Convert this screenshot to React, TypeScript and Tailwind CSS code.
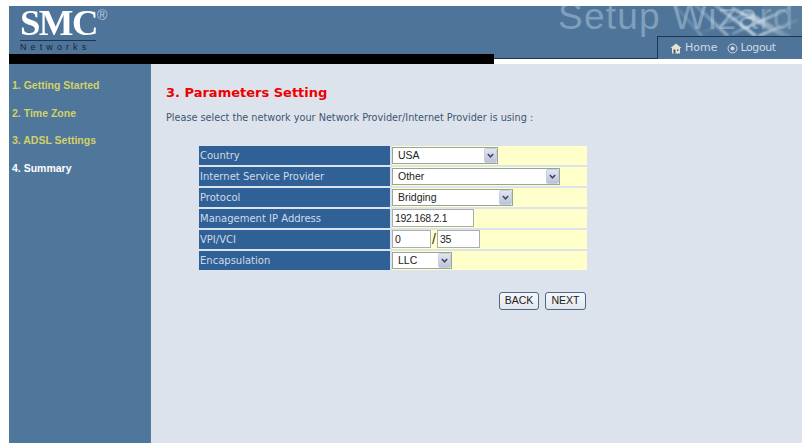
const verdana = "font-['DejaVu_Sans',sans-serif]";
const arial = "font-['Liberation_Sans',Arial,sans-serif]";

const steps = [
  { label: "1. Getting Started", color: "text-[#d2d268]" },
  { label: "2. Time Zone", color: "text-[#d2d268]" },
  { label: "3. ADSL Settings", color: "text-[#d2d268]" },
  { label: "4. Summary", color: "text-white" },
];

const Arrow = () => (
  <span className="absolute right-0 top-0 bottom-0 w-[13px] bg-gradient-to-b from-[#e4e6f0] to-[#bcc3d8] border border-[#c8cfdc] rounded-[2px] flex items-center justify-center pointer-events-none">
    <svg width="7" height="5" viewBox="0 0 7 5">
      <path d="M0.8 1 L3.5 3.8 L6.2 1" fill="none" stroke="#3a4a6a" strokeWidth="1.6" />
    </svg>
  </span>
);

const Select = ({ value, width }: { value: string; width: string }) => (
  <div className={`relative h-[17px] overflow-hidden border border-[#9aa59a] bg-white ${width}`}>
    <select
      defaultValue={value}
      className={`block appearance-none w-full h-[15px] min-h-0 m-0 py-0 pl-[5px] bg-white text-[10.5px] leading-[15px] text-[#222] outline-none ${arial}`}
    >
      <option>{value}</option>
    </select>
    <Arrow />
  </div>
);

const TextInput = ({ value, width }: { value: string; width: string }) => (
  <input
    defaultValue={value}
    className={`h-[18px] border border-[#a9b0a9] bg-white px-[2px] text-[10.5px] tracking-[-0.3px] text-[#222] outline-none ${arial} ${width}`}
  />
);

const rows = [
  { label: "Country", field: <Select value="USA" width="w-[106px]" /> },
  { label: "Internet Service Provider", field: <Select value="Other" width="w-[168px]" /> },
  { label: "Protocol", field: <Select value="Bridging" width="w-[121px]" /> },
  { label: "Management IP Address", field: <TextInput value="192.168.2.1" width="w-[82px]" /> },
  {
    label: "VPI/VCI",
    field: (
      <div className="flex items-center">
        <TextInput value="0" width="w-[39px]" />
        <span className={`w-[6px] text-center text-[14px] leading-none text-[#333] ${arial}`}>/</span>
        <TextInput value="35" width="w-[43px]" />
      </div>
    ),
  },
  { label: "Encapsulation", field: <Select value="LLC" width="w-[60px]" /> },
];

const Btn = ({ children, width }: { children: string; width: string }) => (
  <button
    className={`h-[18px] rounded-[3px] border border-[#4a6a8a] bg-gradient-to-b from-[#f6f7fa] to-[#e2e6ec] text-[10.5px] leading-none text-[#222] ${arial} ${width}`}
  >
    {children}
  </button>
);

export default function App() {
  return (
    <div className="h-[448px] w-[809px] overflow-hidden bg-white pt-[6px] pl-[9px] pr-[7px] pb-[5px] flex flex-col">
      {/* top banner */}
      <div className="relative shrink-0">
        <div className="h-[48px] bg-[#4e7499] overflow-hidden relative">
          <div className="pl-[11px] pt-[2px]">
            <div className="w-[76px] flex items-start h-[32px]">
              <span className="font-['Liberation_Serif',serif] font-bold text-[35px] leading-[32px] text-white tracking-[-1.5px] scale-x-[1.05] origin-left">SMC</span>
              <span className={`absolute left-[88px] top-[2px] text-[14px] leading-none text-[#b9cbdc] ${arial}`}>®</span>
            </div>
            <div className={`w-[76px] border-t border-[#1c3550] pt-[1px] text-[9px] leading-[10px] tracking-[4.1px] text-[#16263a] ${arial}`}>Networks</div>
          </div>

          <span className={`absolute left-[549px] top-[-10px] text-[37px] leading-[42px] tracking-[1.2px] text-[#7f9fba] ${arial}`}>Setup Wizard</span>

          {/* streaky photo behind the wizard title */}
          <svg className="absolute right-0 top-0" width="140" height="48" viewBox="0 0 140 48">
            <defs>
              <filter id="soft"><feGaussianBlur stdDeviation="1" /></filter>
              <linearGradient id="fade" x1="0" x2="1" y1="0" y2="0">
                <stop offset="0" stopColor="#a9c4da" stopOpacity="0.15" />
                <stop offset="0.65" stopColor="#dfeaf2" stopOpacity="0.8" />
                <stop offset="1" stopColor="#8ba8c2" stopOpacity="0.35" />
              </linearGradient>
            </defs>
            <rect x="100" y="0" width="40" height="48" fill="#6f8ea9" opacity="0.35" />
            <g filter="url(#soft)" fill="none" stroke="url(#fade)" strokeWidth="3">
              <path d="M10 -4 L40 30 M30 -4 L66 30 M52 -2 L94 30 M70 2 L122 30 M88 8 L130 32" />
              <path d="M42 26 L88 6 M70 28 L128 2 M96 30 L136 14" strokeWidth="2" />
            </g>
          </svg>
        </div>

        <div className="flex h-[10px]">
          <div className="w-[485px] bg-black" />
          <div className="flex-1">
            <div className="h-[4px] bg-[#4e7499] border-b border-[#1c3550] box-content" />
            <div className="h-[5px] bg-white" />
          </div>
        </div>

        {/* home / logout tab */}
        <div className={`absolute right-0 top-[30px] w-[145px] h-[23px] bg-[#4e7499] border-t border-l border-[#1c3550] flex items-center pl-[12px] pt-[1px] text-[11px] text-[#cdd9e4] ${verdana}`}>
          <svg width="12" height="11" viewBox="0 0 12 11" className="mr-[3px]">
            <path d="M6 0.5 L11.5 5 L10 5 V10.5 H2 V5 L0.5 5 Z" fill="#e6e2d4" />
            <path d="M3.5 6.5 H5.5 V10.5 H3.5 Z M7 6.5 H8.5 V8 H7 Z" fill="#4a5a68" />
          </svg>
          <span>Home</span>
          <svg width="11" height="11" viewBox="0 0 11 11" className="ml-[10px] mr-[2px]">
            <circle cx="5.5" cy="5.5" r="4.5" fill="none" stroke="#cdd9e4" strokeWidth="1" />
            <circle cx="5.5" cy="5.5" r="2" fill="#cdd9e4" />
          </svg>
          <span className="tracking-[-0.4px]">Logout</span>
        </div>
      </div>

      <div className="flex flex-1 min-h-0">
        {/* steps */}
        <aside className="w-[142px] shrink-0 bg-[#4f769b] pt-[14px] pl-[3px] border-r border-[#5d7a96]">
          {steps.map((s) => (
            <div key={s.label} className={`h-[27.5px] text-[10.5px] leading-[14px] font-bold ${arial} ${s.color}`}>
              {s.label}
            </div>
          ))}
        </aside>

        <main className="flex-1 bg-[#dde3ec] pl-[15px]">
          <h1 className={`mt-[21px] text-[13px] leading-[16px] font-bold text-[#ee0000] ${verdana}`}>3. Parameters Setting</h1>
          <p className={`mt-[11px] text-[9.7px] leading-[12px] text-[#3d5570] ${verdana}`}>
            Please select the network your Network Provider/Internet Provider is using :
          </p>

          <div className="ml-[33px] mt-[22px] w-[388px] flex flex-col gap-[2.4px]">
            {rows.map((r) => (
              <div key={r.label} className="flex h-[18.6px] gap-[2px]">
                <div className={`w-[191px] bg-[#2f6096] pl-[1px] flex items-center text-[10px] text-[#cfdbe8] ${verdana}`}>
                  {r.label}
                </div>
                <div className="flex-1 bg-[#ffffcc] flex items-center">{r.field}</div>
              </div>
            ))}
          </div>

          <div className="ml-[333px] mt-[22px] flex gap-[6px]">
            <Btn width="w-[40px]">BACK</Btn>
            <Btn width="w-[41px]">NEXT</Btn>
          </div>
        </main>
      </div>
    </div>
  );
}
